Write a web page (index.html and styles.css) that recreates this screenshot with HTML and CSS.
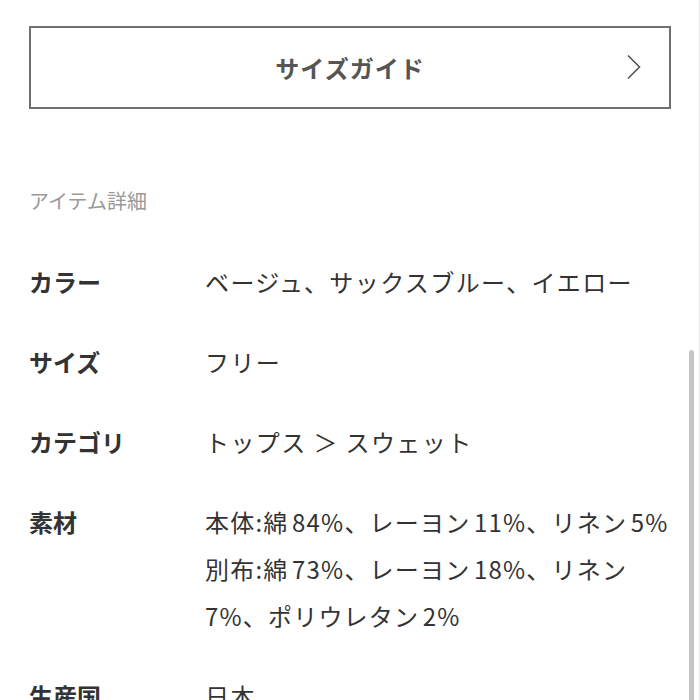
FILE: index.html
```html
<!DOCTYPE html>
<html lang="ja">
<head>
<meta charset="utf-8">
<link rel="stylesheet" href="styles.css">
</head>
<body>
<div class="page">
  <a class="guide">
    <span class="guide-label">サイズガイド</span>
    <svg class="chev" width="16" height="26" viewBox="0 0 16 26"><path d="M2 1.5 L13.5 13 L2 24.5" fill="none" stroke="#555" stroke-width="1.6"/></svg>
  </a>
  <h2 class="section-title">アイテム詳細</h2>
  <dl class="specs">
    <div class="row"><dt>カラー</dt><dd>ベージュ、サックスブルー、イエロー</dd></div>
    <div class="row"><dt>サイズ</dt><dd>フリー</dd></div>
    <div class="row"><dt>カテゴリ</dt><dd>トップス ＞ スウェット</dd></div>
    <div class="row"><dt>素材</dt><dd class="material"><span class="line">本体:綿 84%、レーヨン 11%、リネン 5%</span><span class="line">別布:綿 73%、レーヨン 18%、リネン</span><span class="line">7%、ポリウレタン 2%</span></dd></div>
    <div class="row"><dt>生産国</dt><dd>日本</dd></div>
  </dl>
</div>
<div class="scrollbar"></div>
<div class="edge"></div>
</body>
</html>
```
FILE: styles.css
```css
html, body { margin: 0; padding: 0; background: #fff; }
body {
  font-family: "Noto Sans CJK JP", "Noto Sans", sans-serif;
  color: #333;
  width: 700px;
  height: 700px;
  overflow: hidden;
  position: relative;
}
.page { padding: 26px 29px 0 29px; }
.guide {
  display: flex;
  align-items: center;
  justify-content: center;
  position: relative;
  height: 83px;
  box-sizing: border-box;
  border: 2px solid #707070;
}
.guide-label {
  font-size: 24px;
  font-weight: 700;
  color: #555;
  letter-spacing: 1px;
}
.chev { position: absolute; right: 27px; top: 26px; }
.section-title {
  margin: 77px 0 0 0;
  font-size: 20px;
  font-weight: 400;
  color: #999;
  line-height: 30px;
}
.specs { margin: 42px 0 0 0; display: flex; flex-direction: column; gap: 33px; }
.row { display: flex; }
.row dt {
  width: 176px;
  flex: none;
  font-size: 24px;
  font-weight: 700;
  line-height: 47px;
  color: #333;
}
.row dd {
  margin: 0;
  font-size: 24px;
  line-height: 47px;
  letter-spacing: 1.4px;
  color: #333;
  white-space: nowrap;
}
.row dd.material { letter-spacing: 1.2px; word-spacing: -3px; }
.line { display: block; }
.scrollbar {
  position: absolute;
  left: 689px;
  top: 350px;
  width: 5px;
  height: 360px;
  border-radius: 3px;
  background: #c6c6c6;
}
.edge { position: absolute; right: 0; top: 0; width: 1px; height: 700px; background: #e8e8e8; }
```
